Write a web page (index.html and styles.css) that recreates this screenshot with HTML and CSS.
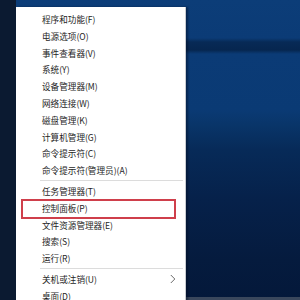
FILE: index.html
```html
<!DOCTYPE html>
<html lang="zh-CN">
<head>
<meta charset="utf-8">
<title>快捷菜单</title>
<link rel="stylesheet" href="styles.css">
</head>
<body>
<div class="desk">
  <div class="menu">
    <ul class="group">
      <li class="item">程序和功能(F)</li>
      <li class="item">电源选项(O)</li>
      <li class="item">事件查看器(V)</li>
      <li class="item">系统(Y)</li>
      <li class="item">设备管理器(M)</li>
      <li class="item">网络连接(W)</li>
      <li class="item">磁盘管理(K)</li>
      <li class="item">计算机管理(G)</li>
      <li class="item">命令提示符(C)</li>
      <li class="item">命令提示符(管理员)(A)</li>
    </ul>
    <div class="sep"></div>
    <ul class="group">
      <li class="item">任务管理器(T)</li>
      <li class="item">控制面板(P)</li>
      <li class="item">文件资源管理器(E)</li>
      <li class="item">搜索(S)</li>
      <li class="item">运行(R)</li>
    </ul>
    <div class="sep"></div>
    <ul class="group">
      <li class="item has-sub">关机或注销(U)
        <svg class="chev" width="6" height="10" viewBox="0 0 6 10"><polyline points="0.8,1 4.8,5 0.8,9" fill="none" stroke="#6b6b6b" stroke-width="1"/></svg>
      </li>
      <li class="item">桌面(D)</li>
    </ul>
  </div>
  <div class="mark"></div>
</div>
</body>
</html>
```

FILE: styles.css
```css
html, body {
  margin: 0;
  padding: 0;
}
body {
  width: 300px;
  height: 300px;
  overflow: hidden;
  font-family: "Noto Sans CJK SC", "Noto Sans", sans-serif;
}
.desk {
  position: relative;
  width: 300px;
  height: 300px;
  box-sizing: border-box;
  padding: 7px 0 0 16px;
  overflow: hidden;
  background:
    linear-gradient(to right, #0b1a31 0, #0b1a31 16px, transparent 16px),
    linear-gradient(to bottom, transparent 0, transparent 297px, #3a475c 297px),
    linear-gradient(to bottom,
      #0c3d78 0, #0b3b76 38px,
      #072a56 42px, #06264f 50px,
      #0b3b76 54px, #0a3a74 110px,
      #093569 125px, #072a58 150px,
      #06214a 200px, #051b3e 260px, #04183a 300px);
}
.menu {
  width: 169px;
  background: #ffffff;
  padding-top: 4px;
  box-shadow: 1px 0 0 #c9ccd1, 3px 0 2px rgba(0, 10, 30, 0.45);
}
.group {
  list-style: none;
  margin: 0;
  padding: 0;
}
.item {
  position: relative;
  height: 16.8px;
  line-height: 16.8px;
  padding-left: 26px;
  font-size: 8.6px;
  color: #1e1e1e;
  white-space: nowrap;
}
.sep {
  height: 1px;
  margin: 1.5px 2px 1.5px 24px;
  background: #dcdcdc;
}
.chev {
  position: absolute;
  right: 9px;
  top: 3.5px;
}
.mark {
  position: absolute;
  left: 21px;
  top: 199px;
  width: 155px;
  height: 20px;
  box-sizing: border-box;
  border: 2px solid #cf3f4b;
}
```
